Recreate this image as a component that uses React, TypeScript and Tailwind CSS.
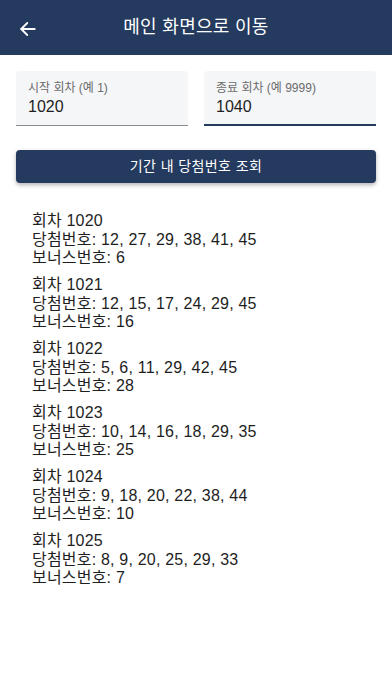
import React from "react";

const results = [
  { round: 1020, nums: "12, 27, 29, 38, 41, 45", bonus: 6 },
  { round: 1021, nums: "12, 15, 17, 24, 29, 45", bonus: 16 },
  { round: 1022, nums: "5, 6, 11, 29, 42, 45", bonus: 28 },
  { round: 1023, nums: "10, 14, 16, 18, 29, 35", bonus: 25 },
  { round: 1024, nums: "9, 18, 20, 22, 38, 44", bonus: 10 },
  { round: 1025, nums: "8, 9, 20, 25, 29, 33", bonus: 7 },
];

export default function App() {
  return (
    <div
      className="w-[392px] h-[696px] bg-white flex flex-col"
      style={{ fontFamily: '"Liberation Sans", "Noto Sans CJK KR", sans-serif' }}
    >
      <div className="h-[55px] bg-[#243a5e] relative flex items-center justify-center shrink-0">
        <svg
          className="absolute left-[19px] top-[20px]"
          width="18"
          height="18"
          viewBox="0 0 24 24"
          fill="none"
          stroke="white"
          strokeWidth="2.4"
          strokeLinecap="round"
          strokeLinejoin="round"
        >
          <path d="M21 12H3" />
          <path d="M11 4l-8 8 8 8" />
        </svg>
        <span className="text-white text-[18px] tracking-[0.3px]">메인 화면으로 이동</span>
      </div>

      <div className="px-4 pt-4">
        <div className="flex gap-4">
          <div className="flex-1 h-[55px] bg-[#f5f6f8] rounded-t-[4px] border-b border-[#8c8c8c] px-3 pt-[9px] flex flex-col">
            <span className="text-[12px] leading-[16px] text-[#6b6b6b]">시작 회차 (예 1)</span>
            <span className="text-[16px] leading-[22px] text-[#1e1e1e]">1020</span>
          </div>
          <div className="flex-1 h-[55px] bg-[#f5f6f8] rounded-t-[4px] border-b-2 border-[#243a5e] px-3 pt-[9px] flex flex-col">
            <span className="text-[12px] leading-[16px] text-[#6b6b6b]">종료 회차 (예 9999)</span>
            <span className="text-[16px] leading-[22px] text-[#1e1e1e]">1040</span>
          </div>
        </div>

        <button className="mt-6 w-full h-[33px] bg-[#243a5e] rounded-[4px] shadow-[0_2px_4px_rgba(0,0,0,0.3)] text-white text-[14px] tracking-[0.4px] flex items-center justify-center">
          기간 내 당첨번호 조회
        </button>

        <div className="mt-[29px] px-4 flex flex-col gap-[8.5px] text-[16px] tracking-[0.2px] leading-[18.5px] text-[#1e1e1e]">
          {results.map((r) => (
            <div key={r.round} className="flex flex-col">
              <span>회차 {r.round}</span>
              <span>당첨번호: {r.nums}</span>
              <span>보너스번호: {r.bonus}</span>
            </div>
          ))}
        </div>
      </div>
    </div>
  );
}
